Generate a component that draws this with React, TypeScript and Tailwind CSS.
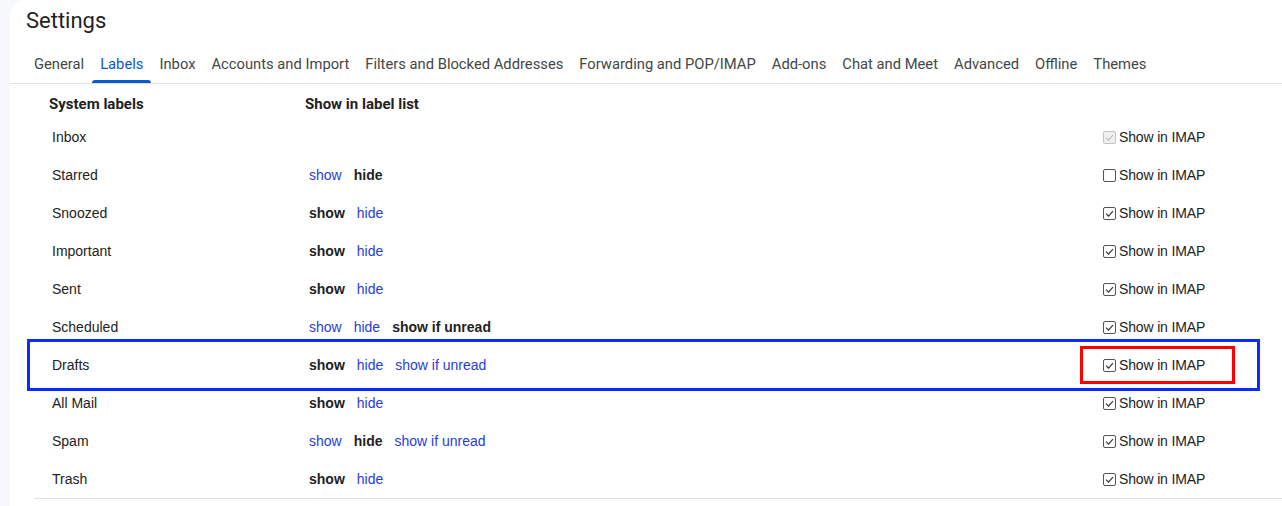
import React from 'react';

type Opt = { text: string; active: boolean };

interface LabelRow {
    name: string;
    options: Opt[];
    imap: 'disabled' | 'on' | 'off';
}

const tabs = ['General', 'Labels', 'Inbox', 'Accounts and Import', 'Filters and Blocked Addresses', 'Forwarding and POP/IMAP', 'Add-ons', 'Chat and Meet', 'Advanced', 'Offline', 'Themes'];

const o = (text: string, active: boolean): Opt => ({ text, active });

const rows: LabelRow[] = [
    { name: 'Inbox', options: [], imap: 'disabled' },
    { name: 'Starred', options: [o('show', false), o('hide', true)], imap: 'off' },
    { name: 'Snoozed', options: [o('show', true), o('hide', false)], imap: 'on' },
    { name: 'Important', options: [o('show', true), o('hide', false)], imap: 'on' },
    { name: 'Sent', options: [o('show', true), o('hide', false)], imap: 'on' },
    { name: 'Scheduled', options: [o('show', false), o('hide', false), o('show if unread', true)], imap: 'on' },
    { name: 'Drafts', options: [o('show', true), o('hide', false), o('show if unread', false)], imap: 'on' },
    { name: 'All Mail', options: [o('show', true), o('hide', false)], imap: 'on' },
    { name: 'Spam', options: [o('show', false), o('hide', true), o('show if unread', false)], imap: 'on' },
    { name: 'Trash', options: [o('show', true), o('hide', false)], imap: 'on' },
];

const Checkbox = ({ state }: { state: LabelRow['imap'] }) => {
    const disabled = state === 'disabled';
    return (
        <span className={`w-[13px] h-[13px] rounded-[2px] border flex items-center justify-center ${disabled ? 'border-[#c4c4c4] bg-[#f0f0f0]' : 'border-[#555] bg-white'}`}>
            {state !== 'off' && (
                <svg viewBox="0 0 12 12" className="w-[11px] h-[11px]">
                    <path d="M2.2 6.2 L4.9 8.8 L9.8 3.4" fill="none" stroke={disabled ? '#bdbdbd' : '#333'} strokeWidth="1.3" />
                </svg>
            )}
        </span>
    );
};

export default function App() {
    return (
        <div className="w-full h-[506px] bg-[#f6f8fc] pl-[10px] overflow-hidden" style={{ fontFamily: 'Roboto, "Liberation Sans", Arial, sans-serif' }}>
            <div className="h-full bg-white rounded-tl-2xl flex flex-col">
                <div className="pl-[16px] pt-[7px] h-[44px] text-[22px] leading-[28px] text-[#1f1f1f]">Settings</div>

                {/* tabs */}
                <div className="flex h-[40px] border-b border-[#e3e3e3] pl-[16px]">
                    {tabs.map(t => (
                        <div key={t} className={`relative px-[8px] pt-[2px] flex items-center text-[14.75px] ${t === 'Labels' ? 'text-[#0b57d0]' : 'text-[#444746]'}`}>
                            {t}
                            {t === 'Labels' && <span className="absolute left-0 right-0 bottom-0 h-[3px] rounded-t-[3px] bg-[#0b57d0]" />}
                        </div>
                    ))}
                </div>

                {/* table */}
                <div className="relative ml-[24px] text-[14px] text-[#222]">
                    <div className="grid grid-cols-[271px_798px_1fr] h-[34px] pt-[10px] font-bold text-[15px]">
                        <div className="pl-[15px] leading-[20px]">System labels</div>
                        <div className="leading-[20px]">Show in label list</div>
                        <div />
                    </div>
                    <div className="border-b border-[#e3e3e3]" style={{ fontFamily: '"Liberation Sans", Arial, sans-serif' }}>
                        {rows.map(r => (
                            <div key={r.name} className="grid grid-cols-[271px_798px_1fr] h-[38px] items-center">
                                <div className="pl-[18px]">{r.name}</div>
                                <div className="pl-[4px] flex gap-[12px]">
                                    {r.options.map(op => (
                                        <span key={op.text} className={op.active ? 'font-bold text-[#222]' : 'text-[#283cdc]'}>{op.text}</span>
                                    ))}
                                </div>
                                <div className="flex items-center gap-[3px]">
                                    <Checkbox state={r.imap} />
                                    <span className="text-[#222] tracking-[-0.15px]">Show in IMAP</span>
                                </div>
                            </div>
                        ))}
                    </div>

                    {/* annotation overlays */}
                    <div className="absolute left-[-7px] top-[255px] w-[1233px] h-[52px] border-[3px] border-[#0a2cff]" />
                    <div className="absolute left-[1046px] top-[262px] w-[155px] h-[38px] border-[3px] border-[#ff0000]" />
                </div>
            </div>
        </div>
    );
}
